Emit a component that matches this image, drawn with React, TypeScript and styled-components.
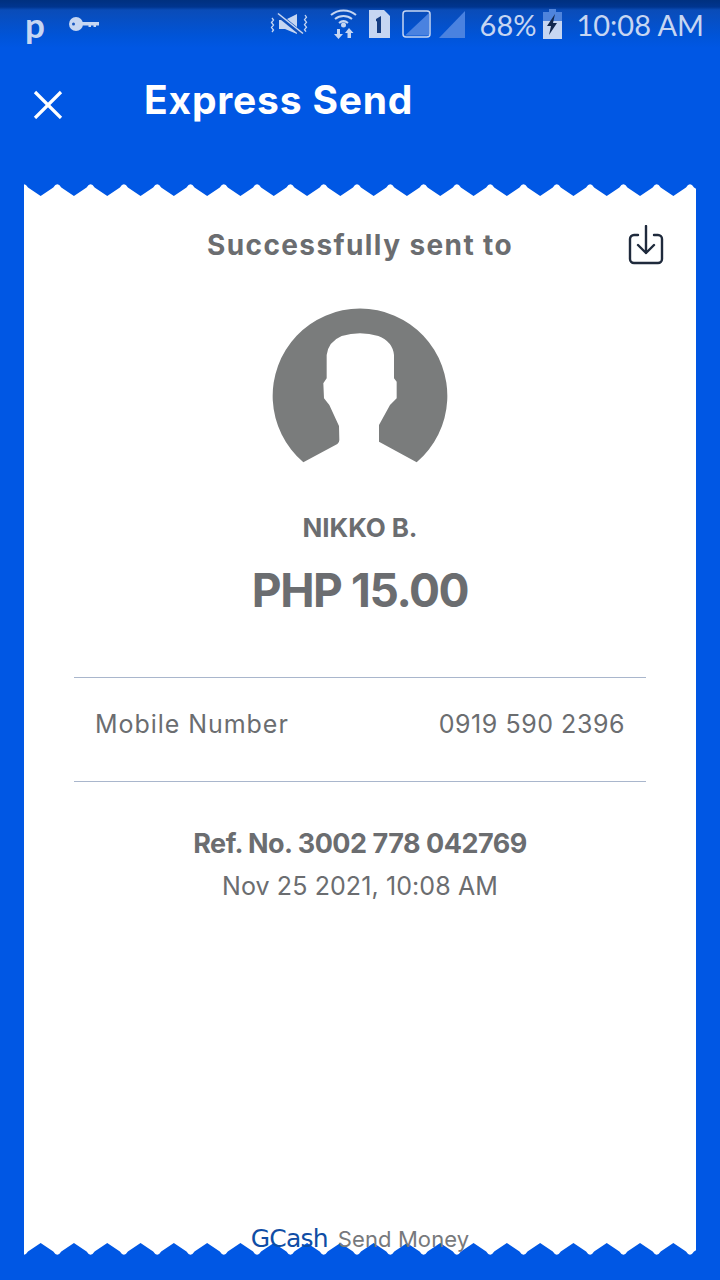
import React from "react";
import styled, { createGlobalStyle } from "styled-components";

const Global = createGlobalStyle`
  html, body { margin: 0; padding: 0; background: #0057e4; }
  * { box-sizing: border-box; }
`;

const Page = styled.div`
  width: 720px;
  height: 1280px;
  background: #0057e4;
  display: flex;
  flex-direction: column;
  overflow: hidden;
  font-family: "Inter", "Liberation Sans", sans-serif;
`;

const StatusBar = styled.div`
  height: 48px;
  flex: none;
  padding: 0 16px 0 25px;
  display: flex;
  align-items: center;
  justify-content: space-between;
  color: #c6d6f2;
  background: linear-gradient(#00307f 0, #00358f 7px, #0a4cb8 10px, #0054d8 36px, #0057e4 48px);
`;

const StatusGroup = styled.div`
  display: flex;
  align-items: center;
`;

const Carrier = styled.span`
  font: 700 35px/33px "Lato", sans-serif;
  width: 44px;
  align-self: flex-start;
`;

const StatusText = styled.span<{ $size: number; $left: number }>`
  font: 400 ${(p) => p.$size}px/1 "Lato", sans-serif;
  margin-left: ${(p) => p.$left}px;
  white-space: nowrap;
`;

const StatusIcon = styled.svg<{ $left?: number }>`
  display: block;
  flex: none;
  margin-left: ${(p) => p.$left ?? 0}px;
`;

const Header = styled.div`
  height: 136px;
  flex: none;
  display: flex;
  align-items: flex-start;
  padding: 39px 0 0 33px;
  color: #fff;
`;

const CloseIcon = styled.svg`
  display: block;
  margin-top: 2px;
`;

const Title = styled.h1`
  margin: -9px 0 0 81px;
  font-size: 39px;
  line-height: 44px;
  font-weight: 700;
  letter-spacing: 0.8px;
`;

const Receipt = styled.div`
  flex: none;
  height: 1071px;
  margin: 0 24px;
  display: flex;
  flex-direction: column;
`;

const ZigZag = styled.svg`
  display: block;
  flex: none;
`;

const Sheet = styled.div`
  flex: 1;
  background: #fff;
  display: flex;
  flex-direction: column;
  align-items: center;
  color: #6b6d70;
`;

const TopLine = styled.div`
  align-self: stretch;
  height: 60px;
  margin-top: 19px;
  padding: 0 32px 0 0;
  display: flex;
  align-items: center;
  justify-content: flex-end;
  position: relative;
`;

const Heading = styled.div`
  position: absolute;
  left: 0;
  right: 0;
  top: 12px;
  text-align: center;
  font-size: 28px;
  line-height: 36px;
  font-weight: 700;
  letter-spacing: 1.4px;
`;

const Avatar = styled.svg`
  display: block;
  margin-top: 25px;
`;

const Name = styled.div`
  margin-top: 37px;
  font-size: 26px;
  line-height: 32px;
  font-weight: 700;
  letter-spacing: -0.1px;
`;

const Amount = styled.div`
  margin-top: 18px;
  font-size: 46px;
  line-height: 56px;
  font-weight: 700;
  letter-spacing: -1.4px;
`;

const Row = styled.div`
  width: 572px;
  height: 105px;
  margin-top: 59px;
  padding: 0 21px 12px;
  border-top: 1px solid #a9b6cc;
  border-bottom: 1px solid #a9b6cc;
  display: flex;
  align-items: center;
  justify-content: space-between;
  font-size: 25px;
  font-weight: 400;
`;

const RowLabel = styled.span`
  letter-spacing: 0.95px;
`;

const RowValue = styled.span`
  letter-spacing: 0.55px;
`;

const RefNo = styled.div`
  margin-top: 44px;
  font-size: 27px;
  line-height: 36px;
  font-weight: 700;
  letter-spacing: -0.5px;
`;

const DateLine = styled.div`
  margin-top: 7px;
  font-size: 25px;
  line-height: 34px;
  letter-spacing: 0.1px;
`;

const Footer = styled.div`
  margin-top: auto;
  margin-bottom: -11px;
  position: relative;
  display: flex;
  align-items: baseline;
  gap: 10px;
  line-height: 30px;
`;

const Brand = styled.span`
  font: 400 25px/30px "DejaVu Sans", sans-serif;
  color: #0f4da5;
  letter-spacing: -0.8px;
`;

const FooterText = styled.span`
  font-size: 22px;
  color: #77797c;
  letter-spacing: 0.1px;
`;

// White scallops of the torn receipt edge: rounded white tips on one side, sharp blue notches on the other.
const zigPath = (invert: boolean) => {
  const w = 672, h = 12, period = 33.3;
  const notchY = invert ? 0 : h;
  const tipY = invert ? h : 0;
  const d = invert ? -1 : 1;
  let s = `M-34,${notchY}`;
  for (let i = -1; i * period <= w + period; i++) {
    const x = i * period;
    s += ` L${x - 4},${tipY + d * 3.5} Q${x},${tipY - d * 3} ${x + 4},${tipY + d * 3.5} L${x + period / 2},${notchY}`;
  }
  return `${s} V${invert ? -1 : 13} H-34 Z`;
};

const App: React.FC = () => (
  <>
    <Global />
    <Page>
      <StatusBar>
        <StatusGroup>
          <Carrier>p</Carrier>
          <StatusIcon width="30" height="16" viewBox="0 0 30 16">
            <circle cx="7" cy="8" r="7" fill="currentColor" />
            <circle cx="4.500" cy="8" r="1.500" fill="#1a58c0" />
            <path d="M13 6h17v3.500h-3V11h-2.500V9.500H22V11h-2.500V9.500H13z" fill="currentColor" />
          </StatusIcon>
        </StatusGroup>
        <StatusGroup>
          <StatusIcon width="38" height="24" viewBox="0 0 38 24">
            <path d="M2 6l1.500 2-2 2.500 2 2.500-2 2.500 2 2.500-1.500 2M35 3l1.500 2.200-2 2.500 2 2.500-2 2.500 2 2.500-2 2.500 1.500 2" stroke="currentColor" strokeWidth="1.300" fill="none" />
            <path d="M9 8h6l12-6v20L15 17H9z" fill="currentColor" />
            <path d="M6 1l26 21" stroke="#0f50bd" strokeWidth="4.500" />
            <path d="M8 1.500l25 20" stroke="currentColor" strokeWidth="1.600" />
          </StatusIcon>
          <StatusIcon $left={22} width="27" height="30" viewBox="0 0 27 30">
            <path d="M1 6C8 0 19 0 26 6M5 10c5-4 12-4 17 0M9 14c3-2.500 6-2.500 9 0" stroke="currentColor" strokeWidth="2" fill="none" />
            <circle cx="13.500" cy="16" r="2.500" fill="currentColor" />
            <path d="M7 20h3v5h3l-4.500 5L4 25h3zM19 19l4.500 5H21v5h-3.500v-5H15z" fill="currentColor" />
          </StatusIcon>
          <StatusIcon $left={12} width="21" height="28" viewBox="0 0 21 28">
            <path d="M0 0h15l6 6v22H0z" fill="currentColor" />
            <path d="M7 9l5-3v17H8V11l-1 .5z" fill="#153d82" />
          </StatusIcon>
          <StatusIcon $left={12} width="29" height="28" viewBox="0 0 29 28">
            <rect x="1" y="1" width="27" height="26" rx="3" fill="none" stroke="currentColor" strokeWidth="1.500" />
            <path d="M27 3v22.500H3z" fill="#4a82e0" />
          </StatusIcon>
          <StatusIcon $left={8} width="26" height="27" viewBox="0 0 26 27">
            <path d="M26 0v27H0z" fill="#4a82e0" />
          </StatusIcon>
          <StatusText $size={29} $left={15}>68%</StatusText>
          <StatusIcon $left={7} width="19" height="30" viewBox="0 0 19 30">
            <path d="M6 0h7v3h6v27H0V3h6z" fill="#4f84dc" />
            <path d="M0 12h19v18H0z" fill="currentColor" />
            <path d="M12 5L4 17h4l-2 9 8-12h-4l2-9z" fill="#12284f" />
          </StatusIcon>
          <StatusText $size={29} $left={14}>10:08 AM</StatusText>
        </StatusGroup>
      </StatusBar>
      <Header>
        <CloseIcon width="30" height="30" viewBox="0 0 30 30">
          <path d="M2 3l26 26M28 3L2 29" stroke="#fff" strokeWidth="3.200" />
        </CloseIcon>
        <Title>Express Send</Title>
      </Header>
      <Receipt>
        <ZigZag width="672" height="12" viewBox="0 0 672 12">
          <path d={zigPath(false)} fill="#fff" />
        </ZigZag>
        <Sheet>
          <TopLine>
            <Heading>Successfully sent to</Heading>
            <StatusIcon width="36" height="40" viewBox="0 0 36 40">
              <path d="M10 10H6a4 4 0 0 0-4 4v20a4 4 0 0 0 4 4h24a4 4 0 0 0 4-4V14a4 4 0 0 0-4-4h-4" fill="none" stroke="#1f2a3c" strokeWidth="2.400" strokeLinecap="round" />
              <path d="M18 1v27M10 20l8 8 8-8" fill="none" stroke="#1f2a3c" strokeWidth="2.400" strokeLinecap="round" strokeLinejoin="round" />
            </StatusIcon>
          </TopLine>
          <Avatar width="200" height="175" viewBox="0 0 600 525">
            <path
              fill="#7a7c7c"
              d="M470 487A262 262 0 1 0 130 487L232 432Q238 428 238 420L237 378L208 315L192 295L190 250L200 235L200 165Q205 125 245 108Q300 92 355 108Q398 125 402 165L402 235L410 245L410 295L390 315L357 375L357 425Z"
            />
          </Avatar>
          <Name>NIKKO B.</Name>
          <Amount>PHP 15.00</Amount>
          <Row>
            <RowLabel>Mobile Number</RowLabel>
            <RowValue>0919 590 2396</RowValue>
          </Row>
          <RefNo>Ref. No. 3002 778 042769</RefNo>
          <DateLine>Nov 25 2021, 10:08 AM</DateLine>
          <Footer>
            <Brand>GCash</Brand>
            <FooterText>Send Money</FooterText>
          </Footer>
        </Sheet>
        <ZigZag width="672" height="12" viewBox="0 0 672 12">
          <path d={zigPath(true)} fill="#fff" />
        </ZigZag>
      </Receipt>
    </Page>
  </>
);

export default App;
